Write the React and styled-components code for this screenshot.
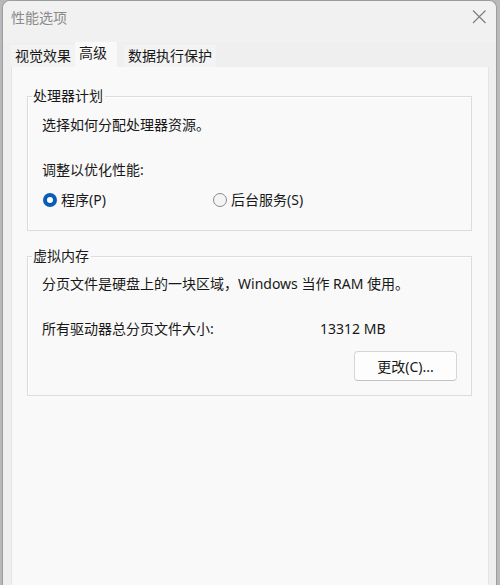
import React from "react";
import styled, { createGlobalStyle } from "styled-components";

const Global = createGlobalStyle`
  html, body {
    margin: 0;
    padding: 0;
    background: #b9b9b9;
    font-family: "Noto Sans", "Noto Sans CJK SC", sans-serif;
    font-size: 14px;
    color: #181818;
  }
`;

const Window = styled.div`
  margin-left: 2px;
  width: 495px;
  height: 585px;
  box-sizing: border-box;
  border: 1px solid #9c9c9c;
  border-bottom: none;
  border-radius: 8px 8px 0 0;
  background: #efefef;
  display: flex;
  flex-direction: column;
  overflow: hidden;
`;

const TitleBar = styled.div`
  height: 41px;
  display: flex;
  align-items: flex-start;
  justify-content: space-between;
  padding: 7px 9px 0 8px;
  box-sizing: border-box;
  background: #f1f1f1;
`;

const Title = styled.span`
  color: #8a8a8a;
  line-height: 20px;
`;

const CloseBtn = styled.button`
  border: none;
  background: none;
  padding: 0;
  margin-top: 1px;
  width: 16px;
  height: 16px;
  display: flex;
`;

const Tabs = styled.div`
  display: flex;
  align-items: flex-end;
  height: 25px;
  padding-left: 8px;
`;

const Tab = styled.div`
  height: ${(p) => (p.$active ? "25px" : "22px")};
  line-height: 22px;
  padding: ${(p) => (p.$active ? "0 10px 3px 4px" : "0 4px")};
  margin-left: ${(p) => p.$gap || 0}px;
  background: ${(p) => (p.$active ? "#f9f9f9" : "#f3f3f3")};
  box-sizing: border-box;
  white-space: nowrap;
`;

const Panel = styled.div`
  flex: 1;
  margin: 0 7px 0 8px;
  background: #f9f9f9;
  border-left: 1px solid #e4e4e4;
  border-right: 1px solid #e4e4e4;
  padding: 19px 16px 0 15px;
  display: flex;
  flex-direction: column;
`;

const Group = styled.fieldset`
  margin: 0 0 ${(p) => p.$after || 0}px 0;
  padding: 0 14px ${(p) => p.$bottom}px 14px;
  border: 1px solid #dcdcdc;
  box-shadow: inset 1px 1px 0 #ffffff;
  min-width: 0;
`;

const Legend = styled.legend`
  margin-left: -10px;
  padding: 0 2px 0 1px;
  line-height: 20px;
`;

const Line = styled.div`
  line-height: 20px;
  margin-top: ${(p) => p.$top}px;
  white-space: nowrap;
`;

const RadioRow = styled.div`
  display: flex;
  margin-top: 10px;
  height: 20px;
  align-items: center;
`;

const Option = styled.label`
  display: flex;
  align-items: center;
  gap: 4px;
  width: ${(p) => p.$width || "auto"};
  line-height: 20px;
`;

const Dot = styled.span`
  width: 14px;
  height: 14px;
  box-sizing: border-box;
  border-radius: 50%;
  margin-left: 1px;
  display: flex;
  align-items: center;
  justify-content: center;
  background: ${(p) => (p.$on ? "#0a5db5" : "#f4f4f4")};
  border: ${(p) => (p.$on ? "none" : "1px solid #8b8b8b")};

  &::after {
    content: "";
    display: ${(p) => (p.$on ? "block" : "none")};
    width: 6px;
    height: 6px;
    border-radius: 50%;
    background: #ffffff;
  }
`;

const SizeRow = styled.div`
  display: flex;
  margin-top: 25px;
  line-height: 20px;
`;

const SizeLabel = styled.span`
  width: 278px;
`;

const ButtonRow = styled.div`
  display: flex;
  justify-content: flex-end;
  margin-top: 12px;
`;

const Button = styled.button`
  width: 103px;
  height: 30px;
  font: inherit;
  color: #181818;
  background: #fdfdfd;
  border: 1px solid #d6d6d6;
  border-bottom-color: #c2c2c2;
  border-radius: 4px;
  padding: 0;
`;

export default function App() {
  return (
    <>
      <Global />
      <Window>
        <TitleBar>
          <Title>性能选项</Title>
          <CloseBtn aria-label="关闭">
            <svg width="16" height="16" viewBox="0 0 16 16">
              <path d="M2 1.5 L14.5 14 M14.5 1.5 L2 14" stroke="#7c7c7c" strokeWidth="1.1" fill="none" />
            </svg>
          </CloseBtn>
        </TitleBar>
        <Tabs>
          <Tab>视觉效果</Tab>
          <Tab $active>高级</Tab>
          <Tab $gap={7}>数据执行保护</Tab>
        </Tabs>
        <Panel>
          <Group $bottom={20} $after={15}>
            <Legend>处理器计划</Legend>
            <Line $top={9}>选择如何分配处理器资源。</Line>
            <Line $top={25}>调整以优化性能:</Line>
            <RadioRow>
              <Option $width="170px">
                <Dot $on />
                程序(P)
              </Option>
              <Option>
                <Dot />
                后台服务(S)
              </Option>
            </RadioRow>
          </Group>
          <Group $bottom={14}>
            <Legend>虚拟内存</Legend>
            <Line $top={8}>分页文件是硬盘上的一块区域，Windows 当作 RAM 使用。</Line>
            <SizeRow>
              <SizeLabel>所有驱动器总分页文件大小:</SizeLabel>
              <span>13312 MB</span>
            </SizeRow>
            <ButtonRow>
              <Button>更改(C)...</Button>
            </ButtonRow>
          </Group>
        </Panel>
      </Window>
    </>
  );
}
